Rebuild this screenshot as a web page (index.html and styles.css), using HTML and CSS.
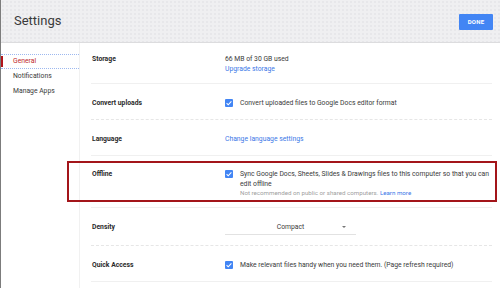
FILE: index.html
```html
<!DOCTYPE html>
<html lang="en">
<head>
<meta charset="utf-8">
<title>Settings</title>
<link rel="stylesheet" href="styles.css">
</head>
<body>
<header class="topbar">
  <h1 class="title">Settings</h1>
  <button class="done">DONE</button>
</header>
<div class="layout">
  <nav class="sidebar">
    <div class="nav-item active">General</div>
    <div class="nav-item">Notifications</div>
    <div class="nav-item">Manage Apps</div>
  </nav>
  <main class="content">
    <section class="row row-storage">
      <div class="label">Storage</div>
      <div class="value">
        <div class="line">66 MB of 30 GB used</div>
        <div class="line link">Upgrade storage</div>
      </div>
    </section>
    <section class="row sep-dotted">
      <div class="label">Convert uploads</div>
      <div class="value check-row">
        <span class="checkbox"><svg viewBox="0 0 8 8" width="8" height="8"><path d="M1.6 4.2 L3.2 5.8 L6.4 2.4" fill="none" stroke="#fff" stroke-width="1.1"/></svg></span>
        <div class="line">Convert uploaded files to Google Docs editor format</div>
      </div>
    </section>
    <section class="row">
      <div class="label">Language</div>
      <div class="value"><div class="line link">Change language settings</div></div>
    </section>
    <section class="row row-offline">
      <div class="label">Offline</div>
      <div class="value check-row">
        <span class="checkbox"><svg viewBox="0 0 8 8" width="8" height="8"><path d="M1.6 4.2 L3.2 5.8 L6.4 2.4" fill="none" stroke="#fff" stroke-width="1.1"/></svg></span>
        <div class="text-block">
          <div class="line wrap">Sync Google Docs, Sheets, Slides &amp; Drawings files to this computer so that you can edit offline</div>
          <div class="hint">Not recommended on public or shared computers. <span class="link">Learn more</span></div>
        </div>
      </div>
    </section>
    <section class="row sep-dotted row-density">
      <div class="label">Density</div>
      <div class="value">
        <div class="select">
          <span class="select-text">Compact</span>
          <span class="caret"></span>
        </div>
      </div>
    </section>
    <section class="row">
      <div class="label">Quick Access</div>
      <div class="value check-row">
        <span class="checkbox"><svg viewBox="0 0 8 8" width="8" height="8"><path d="M1.6 4.2 L3.2 5.8 L6.4 2.4" fill="none" stroke="#fff" stroke-width="1.1"/></svg></span>
        <div class="line">Make relevant files handy when you need them. (Page refresh required)</div>
      </div>
    </section>
  </main>
</div>
</body>
</html>
```

FILE: styles.css
```css
* { box-sizing: border-box; }
html, body { margin: 0; padding: 0; }
body {
  width: 500px;
  height: 288px;
  overflow: hidden;
  background: #ffffff;
  border-left: 1px solid #7c7c7c;
  font-family: Roboto, "Liberation Sans", Arial, sans-serif;
  color: #333333;
}
.topbar {
  height: 43px;
  display: flex;
  align-items: center;
  justify-content: space-between;
  padding: 0 7px 0 13px;
  background-color: #efeff1;
  background-image: radial-gradient(circle, #dedee2 0.6px, transparent 0.8px);
  background-size: 4px 4px;
  border-bottom: 1px solid #dcdcde;
}
.title {
  margin: 0;
  font-size: 13px;
  font-weight: 400;
  color: #3a3a3a;
  padding-bottom: 2px;
}
.done {
  width: 34px;
  height: 16px;
  border: none;
  border-radius: 1px;
  background: #4285f4;
  color: #ffffff;
  font-family: Roboto, "Liberation Sans", Arial, sans-serif;
  font-size: 6px;
  font-weight: 700;
  letter-spacing: 0.2px;
  padding: 0;
  margin-top: 1px;
}
.layout {
  display: flex;
  height: 245px;
}
.sidebar {
  width: 79px;
  flex: none;
  border-right: 1px solid #f1f1f1;
  padding-top: 11px;
}
.nav-item {
  height: 15px;
  line-height: 15px;
  padding-left: 12px;
  font-size: 6.8px;
  color: #3a3a3a;
}
.nav-item.active {
  color: #c0262a;
  border-top: 1px dotted #9db8ef;
  border-bottom: 1px dotted #9db8ef;
  line-height: 13px;
  position: relative;
}
.nav-item.active::before {
  content: "";
  position: absolute;
  left: -1px;
  top: 1px;
  width: 3px;
  height: 11px;
  background: #b3161c;
}
.content {
  flex: 1;
  margin: 0 10px 0 11px;
}
.row {
  display: flex;
  align-items: flex-start;
  padding: 14px 0 11px 1px;
  border-bottom: 1px solid #f0f0f0;
  font-size: 6.8px;
}
.row.sep-dotted { border-bottom: 1px dashed #e6e6e6; }
.row-storage { padding-top: 11px; padding-bottom: 9px; }
.row-offline {
  position: relative;
  padding-top: 13px;
  padding-bottom: 10px;
}
.row-offline::after {
  content: "";
  position: absolute;
  left: -24px;
  right: -5px;
  top: 5px;
  bottom: 5px;
  border: 2px solid #a3151a;
  pointer-events: none;
}
.label {
  width: 133px;
  flex: none;
  font-weight: 700;
  color: #2a2a2a;
  line-height: 10px;
}
.value { flex: 1; }
.line { line-height: 10px; color: #3a3a3a; }
.link { color: #3b78e7; }
.check-row {
  display: flex;
  align-items: flex-start;
  gap: 7px;
}
.checkbox {
  flex: none;
  width: 8px;
  height: 8px;
  margin-top: 1px;
  background: #4285f4;
  border-radius: 1px;
  display: flex;
}
.text-block { width: 252px; }
.hint {
  font-size: 6.2px;
  line-height: 8px;
  color: #a0a0a0;
}
.hint .link { color: #3b78e7; }
.row-density { padding-bottom: 10px; }
.select {
  width: 131px;
  height: 13px;
  border-bottom: 1px solid #e2e2e2;
  position: relative;
  display: flex;
  justify-content: center;
  line-height: 11px;
}
.select-text { color: #3a3a3a; }
.caret {
  position: absolute;
  right: 10px;
  top: 4px;
  width: 0;
  height: 0;
  border-left: 2.5px solid transparent;
  border-right: 2.5px solid transparent;
  border-top: 2.5px solid #777777;
}
```
